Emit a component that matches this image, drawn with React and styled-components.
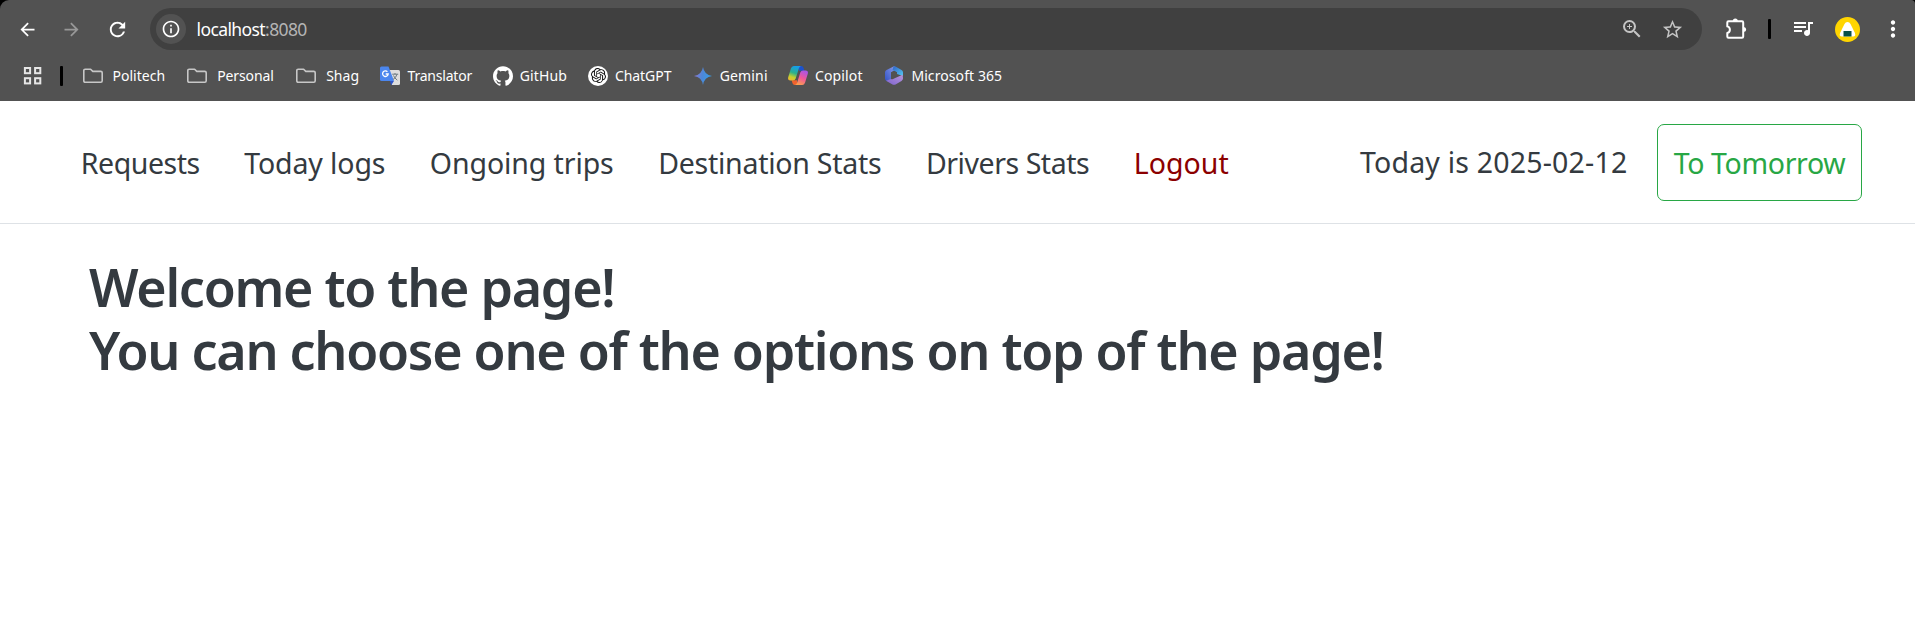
import React from "react";
import styled, { createGlobalStyle } from "styled-components";
import {
  MdArrowBack,
  MdArrowForward,
  MdRefresh,
  MdInfoOutline,
  MdZoomIn,
  MdStarOutline,
  MdQueueMusic,
  MdMoreVert,
} from "react-icons/md";
import { SiGithub, SiOpenai } from "react-icons/si";

const GlobalStyle = createGlobalStyle`
  * { box-sizing: border-box; }
  body {
    margin: 0;
    background: #fff;
    font-family: "Segoe UI", "Noto Sans", "Open Sans", sans-serif;
    overflow: hidden;
  }
  svg { display: block; flex: none; }
`;

/* ---------- browser frame ---------- */

const Frame = styled.div`
  background: #000;
`;

const Chrome = styled.header`
  height: 101px;
  background: #525252;
  border-radius: 9px 4px 0 0;
  color: #fff;
`;

const Toolbar = styled.div`
  display: flex;
  align-items: center;
  height: 58px;
  padding-left: 5px;
`;

const IconButton = styled.button`
  display: flex;
  align-items: center;
  justify-content: center;
  width: ${(p) => p.$width || 44}px;
  height: 40px;
  padding: 0 0 ${(p) => p.$lift || 0}px;
  border: 0;
  background: none;
  color: ${(p) => (p.$muted ? "#989898" : "#fff")};
`;

const Omnibox = styled.div`
  display: flex;
  align-items: center;
  width: 1552px;
  height: 42px;
  margin: 0 12px 0 9px;
  padding: 0 10px 0 6px;
  border-radius: 21px;
  background: #404040;
`;

const SiteInfo = styled.span`
  display: flex;
  align-items: center;
  justify-content: center;
  width: 30px;
  height: 30px;
  border-radius: 50%;
  background: #525252;
`;

const Address = styled.span`
  flex: 1;
  padding: 0 0 1px 10.5px;
  font-size: 17.5px;
  line-height: 24px;
  letter-spacing: -0.6px;
`;

const Port = styled.span`
  color: #b4b4b4;
`;

const OmniButton = styled(IconButton)`
  width: 40px;
  color: #c4c4c4;
`;

const Divider = styled.span`
  width: 3px;
  height: 20px;
  border-radius: 1px;
  background: #000;
  margin: ${(p) => p.$margin};
`;

const Avatar = styled.span`
  display: flex;
  width: 25px;
  height: 25px;
  border-radius: 50%;
  background: #ffd500;
`;

const BookmarkBar = styled.div`
  display: flex;
  align-items: center;
  height: 35px;
  padding-left: 22px;
`;

const Bookmark = styled.a`
  display: flex;
  align-items: center;
  flex: none;
  gap: ${(p) => p.$gap}px;
  width: ${(p) => p.$width}px;
  font-size: 14px;
  line-height: 20px;
  letter-spacing: ${(p) => p.$track || 0}px;
  white-space: nowrap;
`;

const BookmarkIcon = styled.span`
  display: flex;
  align-items: center;
  justify-content: center;
  width: 20px;
  height: 21px;
`;

const GptBadge = styled.span`
  display: flex;
  align-items: center;
  justify-content: center;
  width: 20px;
  height: 20px;
  border-radius: 50%;
  background: #fff;
  color: #111;
`;

/* ---------- page ---------- */

const NavBar = styled.nav`
  display: flex;
  align-items: center;
  height: 123px;
  padding: 0 53px 0 58.5px;
  background: #fff;
  border-bottom: 1px solid #dee2e6;
  color: #343a40;
  font-size: 28.5px;
  line-height: 42px;
  white-space: nowrap;
`;

const NavLink = styled.a`
  padding: 2px 22.25px 0;
  letter-spacing: ${(p) => p.$track || 0}px;
  color: ${(p) => (p.$danger ? "#8b0000" : "inherit")};
`;

const Today = styled.span`
  margin-left: auto;
  margin-right: 29.5px;
  letter-spacing: 0.2px;
`;

const OutlineButton = styled.button`
  width: 205px;
  height: 77px;
  padding: 1px 0 0;
  border: 1px solid #28a745;
  border-radius: 7px;
  background: none;
  color: #28a745;
  font: inherit;
  letter-spacing: -0.35px;
`;

const Main = styled.main`
  padding: 31px 89px;
`;

const Heading = styled.h1`
  margin: 0;
  color: #343a40;
  font-size: 52px;
  font-weight: 570;
  line-height: 63px;
  letter-spacing: -1.28px;
`;

/* ---------- drawings ---------- */

const AppsIcon = () => (
  <svg width="20" height="20" viewBox="0 0 20 20" fill="none" stroke="#e6e6e6" strokeWidth="2">
    <rect x="2.9" y="2" width="5.2" height="5.2" />
    <rect x="13.1" y="2" width="5.2" height="5.2" />
    <rect x="2.9" y="12.2" width="5.2" height="5.2" />
    <rect x="13.1" y="12.2" width="5.2" height="5.2" />
  </svg>
);

const FolderIcon = () => (
  <svg width="20" height="16" viewBox="0 0 20 16" fill="none" stroke="#c7c7c7" strokeWidth="1.6" strokeLinejoin="round">
    <path d="M2.2 1.2h5.4l2.2 2.2h8q1.4 0 1.4 1.4v8q0 1.4-1.4 1.4H2.2q-1.4 0-1.4-1.4V2.6q0-1.4 1.4-1.4z" />
  </svg>
);

const TranslateIcon = () => (
  <svg width="20" height="20" viewBox="0 0 20 20">
    <path d="M8 4h10.5q1.5 0 1.5 1.5v12q0 1.5-1.5 1.5H12z" fill="#dedede" />
    <path d="M10 15h4l-2.8 4.2z" fill="#2f55c8" />
    <path d="M1.5 0.5h7L14 15H1.5Q0 15 0 13.5V2Q0 .5 1.5.5z" fill="#4b86ee" />
    <path d="M7.4 5.7a2.8 2.8 0 1 0 .8 2.3H5.7" fill="none" stroke="#fff" strokeWidth="1.3" />
    <path d="M12.2 8.2h6M15 7v1.2M17 8.2q-.8 3.5-4 5.3M13.5 9.5q1 2.6 3.8 4.7" fill="none" stroke="#6d7a80" strokeWidth="1" />
  </svg>
);

const GeminiIcon = () => (
  <svg width="18" height="18" viewBox="0 0 18 18">
    <defs>
      <linearGradient id="gem" x1="0" y1="0.4" x2="1" y2="0.6">
        <stop offset="0" stopColor="#9079d2" />
        <stop offset=".45" stopColor="#4d87d9" />
        <stop offset="1" stopColor="#35a0e8" />
      </linearGradient>
    </defs>
    <path d="M9 0Q10.2 7.8 18 9Q10.2 10.2 9 18Q7.8 10.2 0 9Q7.8 7.8 9 0z" fill="url(#gem)" />
  </svg>
);

const CopilotIcon = () => (
  <svg width="20" height="19" viewBox="0 0 20 19">
    <defs>
      <linearGradient id="cpl" x1="0.5" y1="0" x2="0.2" y2="1">
        <stop offset="0" stopColor="#159de8" />
        <stop offset=".45" stopColor="#2bb08c" />
        <stop offset=".75" stopColor="#c6cf2e" />
        <stop offset="1" stopColor="#f0b432" />
      </linearGradient>
      <linearGradient id="cpr" x1="0.7" y1="0" x2="0.3" y2="1">
        <stop offset="0" stopColor="#a855e8" />
        <stop offset=".5" stopColor="#f0579a" />
        <stop offset="1" stopColor="#fba04d" />
      </linearGradient>
    </defs>
    <path d="M11 0h2.3q1.7 0 2.2 1.7l.9 3H11z" fill="#1d52cc" />
    <path d="M9 19H6.7q-1.7 0-2.2-1.7l-.9-3H9z" fill="#f0622d" />
    <path d="M5.8 0H13q-1.4.3-2 2L7.7 12.5q-.7 2-2.7 2H2.3Q-.6 14.5.2 11.2L2.9 2.5Q3.7 0 5.8 0z" fill="url(#cpl)" />
    <path d="M14.2 19H7q1.4-.3 2-2l3.3-10.5q.7-2 2.7-2h2.7q2.9 0 2.1 3.3l-2.7 8.7q-.8 2.5-2.9 2.5z" fill="url(#cpr)" />
  </svg>
);

const Microsoft365Icon = () => (
  <svg width="18" height="19" viewBox="0 0 18 19">
    <defs>
      <linearGradient id="msl" x1="1" y1="0" x2="0" y2="1">
        <stop offset="0" stopColor="#8b9bea" />
        <stop offset="1" stopColor="#3152c4" />
      </linearGradient>
      <linearGradient id="msb" x1="0" y1="1" x2="1" y2="0">
        <stop offset="0" stopColor="#7d63cd" />
        <stop offset="1" stopColor="#b795dd" />
      </linearGradient>
      <linearGradient id="msr" x1="0" y1="0" x2="1" y2="1">
        <stop offset="0" stopColor="#2f63c8" />
        <stop offset="1" stopColor="#55c8f2" />
      </linearGradient>
    </defs>
    <path d="M9.5 0L1.5 4Q0 4.8 0 6.5v6Q0 14.3 1.5 15L4.5 15.5L6 13V6.5L10 4z" fill="url(#msl)" />
    <path d="M8.5 .4Q9.5 0 10.5.5L16.5 4Q18 4.8 18 6.5V10L12 8V6.2L7.5 4z" fill="url(#msr)" />
    <path d="M1 14.7L6 13q1 .5 2 0l9.5-4.300q.5 2.300.5 3.800q0 1.500-1.500 2.400L10.500 18.400q-1.500.8-3 0z" fill="url(#msb)" />
    <path d="M6 6.5L9 5l3 1.500V9.500L7 13q-1-.2-1-1z" fill="#525252" />
  </svg>
);

const PuzzleIcon = () => (
  <svg width="22" height="22" viewBox="0 0 22 22">
    <path
      d="M3.5 3.3H17q1.2 0 1.2 1.2v14q0 1.2-1.2 1.2H3.5q-1.2 0-1.2-1.2V15q2.6-.6 2.6-3.3T2.3 8.4V4.5q0-1.2 1.2-1.2z"
      fill="none"
      stroke="#fff"
      strokeWidth="2"
      strokeLinejoin="round"
    />
    <path d="M7.8 3a2.5 2.5 0 0 1 5 0zM18.7 9a2.5 2.5 0 0 1 0 5z" fill="#fff" />
  </svg>
);

const RiceBall = () => (
  <svg width="25" height="25" viewBox="0 0 25 25">
    <path d="M12.5 5q2 0 3 2l4.2 8.500q1.700 4-1.700 4H7q-3.400 0-1.700-4L9.500 7q1-2 3-2z" fill="#fff" />
    <rect x="8.5" y="14" width="8" height="5.5" fill="#085048" />
  </svg>
);

const bookmarks = [
  { label: "Politech", icon: <FolderIcon />, width: 104.5, gap: 9.9, track: 0.05 },
  { label: "Personal", icon: <FolderIcon />, width: 109, gap: 10.2, track: -0.12 },
  { label: "Shag", icon: <FolderIcon />, width: 84, gap: 10.2 },
  { label: "Translator", icon: <TranslateIcon />, width: 113, gap: 7.5, track: -0.2 },
  { label: "GitHub", icon: <SiGithub size={20} />, width: 95, gap: 6.8, track: 0.1 },
  {
    label: "ChatGPT",
    icon: (
      <GptBadge>
        <SiOpenai size={15} />
      </GptBadge>
    ),
    width: 104.5,
    gap: 6.9,
    track: -0.05,
  },
  { label: "Gemini", icon: <GeminiIcon />, width: 95.5, gap: 7.2, track: 0.15 },
  { label: "Copilot", icon: <CopilotIcon />, width: 96, gap: 6.9, track: 0.15 },
  { label: "Microsoft 365", icon: <Microsoft365Icon />, width: 125, gap: 7.4, track: 0.08 },
];

const links = [
  { label: "Requests", track: -0.45 },
  { label: "Today logs", track: -0.13 },
  { label: "Ongoing trips", track: -0.1 },
  { label: "Destination Stats", track: -0.25 },
  { label: "Drivers Stats", track: -0.45 },
  { label: "Logout", track: 0.02, danger: true },
];

export default function App() {
  return (
    <>
      <GlobalStyle />
      <Frame>
        <Chrome>
          <Toolbar>
            <IconButton><MdArrowBack size={21} /></IconButton>
            <IconButton $muted><MdArrowForward size={21} /></IconButton>
            <IconButton $width={48}><MdRefresh size={23} /></IconButton>
            <Omnibox>
              <SiteInfo><MdInfoOutline size={20} /></SiteInfo>
              <Address>localhost<Port>:8080</Port></Address>
              <OmniButton><MdZoomIn size={24} /></OmniButton>
              <OmniButton><MdStarOutline size={23} /></OmniButton>
            </Omnibox>
            <IconButton><PuzzleIcon /></IconButton>
            <Divider $margin="0 10px" />
            <IconButton $width={43} $lift={3}><MdQueueMusic size={24} /></IconButton>
            <IconButton $width={46}><Avatar><RiceBall /></Avatar></IconButton>
            <IconButton $width={45}><MdMoreVert size={26} /></IconButton>
          </Toolbar>
          <BookmarkBar>
            <AppsIcon />
            <Divider $margin="0 19.5px 0 18px" />
            {bookmarks.map((b) => (
              <Bookmark key={b.label} $width={b.width} $gap={b.gap} $track={b.track}>
                <BookmarkIcon>{b.icon}</BookmarkIcon>
                {b.label}
              </Bookmark>
            ))}
          </BookmarkBar>
        </Chrome>
      </Frame>
      <NavBar>
        {links.map((l) => (
          <NavLink key={l.label} $track={l.track} $danger={l.danger}>{l.label}</NavLink>
        ))}
        <Today>Today is 2025-02-12</Today>
        <OutlineButton>To Tomorrow</OutlineButton>
      </NavBar>
      <Main>
        <Heading>
          Welcome to the page!
          <br />
          You can choose one of the options on top of the page!
        </Heading>
      </Main>
    </>
  );
}
